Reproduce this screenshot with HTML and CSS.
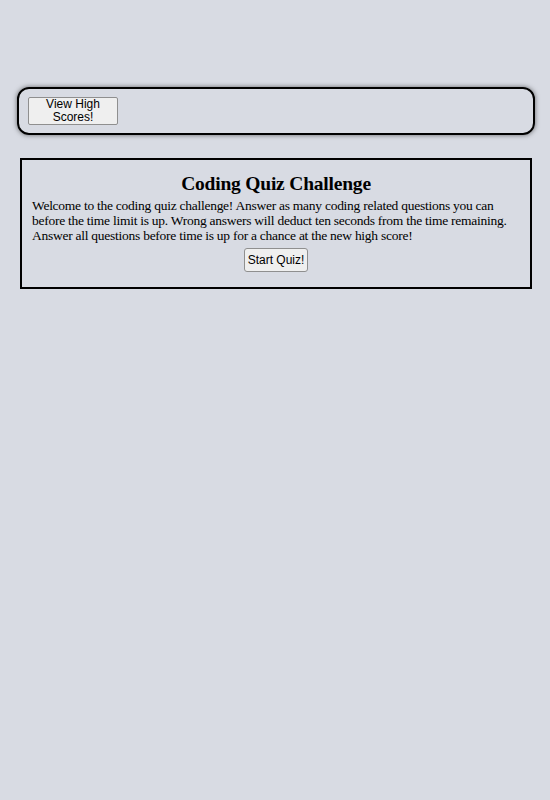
FILE: index.html
```html
<!DOCTYPE html>
<html>
<head>
<meta charset="utf-8">
<link rel="stylesheet" href="styles.css">
</head>
<body>
<header class="top-bar">
  <button class="scores-btn">View High Scores!</button>
</header>
<main class="quiz-card">
  <h1 class="quiz-title">Coding Quiz Challenge</h1>
  <p class="quiz-intro">Welcome to the coding quiz challenge! Answer as many coding related questions you can before the time limit is up. Wrong answers will deduct ten seconds from the time remaining. Answer all questions before time is up for a chance at the new high score!</p>
  <div class="actions">
    <button class="start-btn">Start Quiz!</button>
  </div>
</main>
</body>
</html>
```

FILE: styles.css
```css
html, body {
  background: #d8dbe3;
}
body {
  margin: 0;
  padding: 87px 15px 0 17px;
  font-family: "Liberation Serif", "Times New Roman", serif;
  color: #000;
}
.top-bar {
  display: flex;
  align-items: flex-start;
  border: 2px solid #000;
  border-radius: 12px;
  box-shadow: 0 0 5px rgba(0, 0, 0, 0.55);
  padding: 8px 9px 8px;
}
.scores-btn {
  width: 90px;
  height: 28px;
  font-family: "Liberation Sans", Arial, sans-serif;
  font-size: 12px;
  line-height: 13px;
  padding: 0 6px;
  background: #efefef;
  border: 1px solid #8f8f8f;
  border-radius: 2px;
  color: #000;
}
.quiz-card {
  margin: 23px 3px 0 3px;
  border: 2px solid #000;
  padding: 11px 10px 15px;
}
.quiz-title {
  margin: 0;
  text-align: center;
  font-size: 19.5px;
  letter-spacing: -0.2px;
  line-height: 26px;
  font-weight: bold;
}
.quiz-intro {
  margin: 0;
  font-size: 13.5px;
  letter-spacing: -0.26px;
  line-height: 15px;
  padding-top: 1px;
}
.actions {
  display: flex;
  justify-content: center;
  margin-top: 5px;
}
.start-btn {
  height: 24px;
  font-family: "Liberation Sans", Arial, sans-serif;
  font-size: 12px;
  padding: 0 3px;
  background: #efefef;
  border: 1px solid #8f8f8f;
  border-radius: 3px;
  color: #000;
}
```
